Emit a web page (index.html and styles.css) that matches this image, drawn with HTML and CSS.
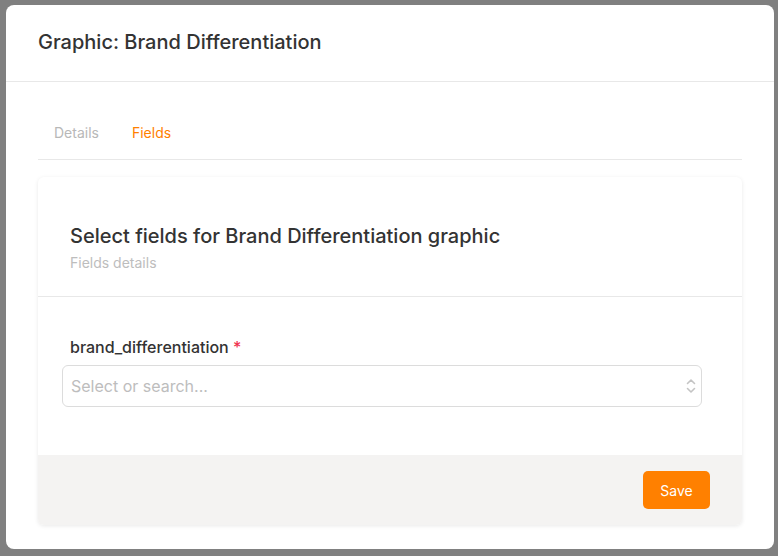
FILE: index.html
```html
<!DOCTYPE html>
<html>
<head>
<meta charset="utf-8">
<link rel="stylesheet" href="styles.css">
</head>
<body>
<div class="modal">
  <div class="modal-header">
    <h1 class="modal-title">Graphic: Brand Differentiation</h1>
  </div>
  <div class="modal-content">
    <div class="tabs">
      <span class="tab">Details</span>
      <span class="tab active">Fields</span>
    </div>
    <div class="card">
      <div class="card-header">
        <h2 class="card-title">Select fields for Brand Differentiation graphic</h2>
        <p class="card-subtitle">Fields details</p>
      </div>
      <div class="card-body">
        <label class="field-label">brand_differentiation <span class="req">*</span></label>
        <div class="select">
          <span class="placeholder">Select or search...</span>
          <svg class="chev" width="10" height="16" viewBox="0 0 10 16" fill="none" stroke="#c4c4c4" stroke-width="1.6" stroke-linecap="round" stroke-linejoin="round">
            <path d="M1.5 5.5 L5 2 L8.5 5.5"/>
            <path d="M1.5 10.5 L5 14 L8.5 10.5"/>
          </svg>
        </div>
      </div>
      <div class="card-footer">
        <button class="btn-save">Save</button>
      </div>
    </div>
  </div>
</div>
</body>
</html>
```

FILE: styles.css
```css
html, body {
  margin: 0;
  padding: 0;
}
body {
  background: #808080;
  font-family: Inter, "Noto Sans", sans-serif;
  width: 778px;
  height: 556px;
  overflow: hidden;
}
.modal {
  margin: 5px 0 0 6px;
  width: 768px;
  height: 544px;
  background: #fff;
  border-radius: 8px;
  box-sizing: border-box;
}
.modal-header {
  height: 77px;
  box-sizing: border-box;
  border-bottom: 1px solid #e8e8e8;
  display: flex;
  align-items: center;
  padding: 0 32px 3px;
}
.modal-title {
  margin: 0;
  font-size: 20px;
  font-weight: 500;
  color: #333;
}
.modal-content {
  padding: 24px 32px 0;
}
.tabs {
  display: flex;
  border-bottom: 1px solid #e8e8e8;
}
.tab {
  padding: 17px 16px 16px;
  font-size: 14px;
  line-height: 20px;
  color: #b8b8b8;
}
.tab.active {
  color: #ff8000;
  margin-left: 1px;
}
.card {
  margin-top: 17px;
  border-radius: 6px;
  background: #fff;
  box-shadow: 0 1px 4px rgba(0,0,0,0.09);
  overflow: hidden;
}
.card-header {
  padding: 45px 32px 23px;
  border-bottom: 1px solid #e8e8e8;
}
.card-title {
  margin: 0;
  font-size: 20px;
  line-height: 28px;
  font-weight: 500;
  color: #333;
}
.card-subtitle {
  margin: 3px 0 0;
  font-size: 14px;
  line-height: 20px;
  color: #bdbdbd;
}
.card-body {
  padding: 40px 40px 48px 24px;
}
.field-label {
  display: block;
  padding-left: 8px;
  margin-bottom: 8px;
  font-size: 16px;
  line-height: 20px;
  font-weight: 500;
  color: #333;
}
.req {
  color: #f0334f;
}
.select {
  height: 42px;
  box-sizing: border-box;
  border: 1px solid #dcdcdc;
  border-radius: 6px;
  display: flex;
  align-items: center;
  justify-content: space-between;
  padding: 0 5px 0 8px;
}
.placeholder {
  font-size: 16px;
  color: #bdbdbd;
}
.chev {
  display: block;
}
.card-footer {
  background: #f4f3f2;
  padding: 16px 32px;
  display: flex;
  justify-content: flex-end;
}
.btn-save {
  height: 38px;
  width: 67px;
  border: none;
  border-radius: 5px;
  background: #ff8000;
  color: #fff;
  font-family: Inter, "Noto Sans", sans-serif;
  font-size: 14px;
  padding: 0;
}
```
